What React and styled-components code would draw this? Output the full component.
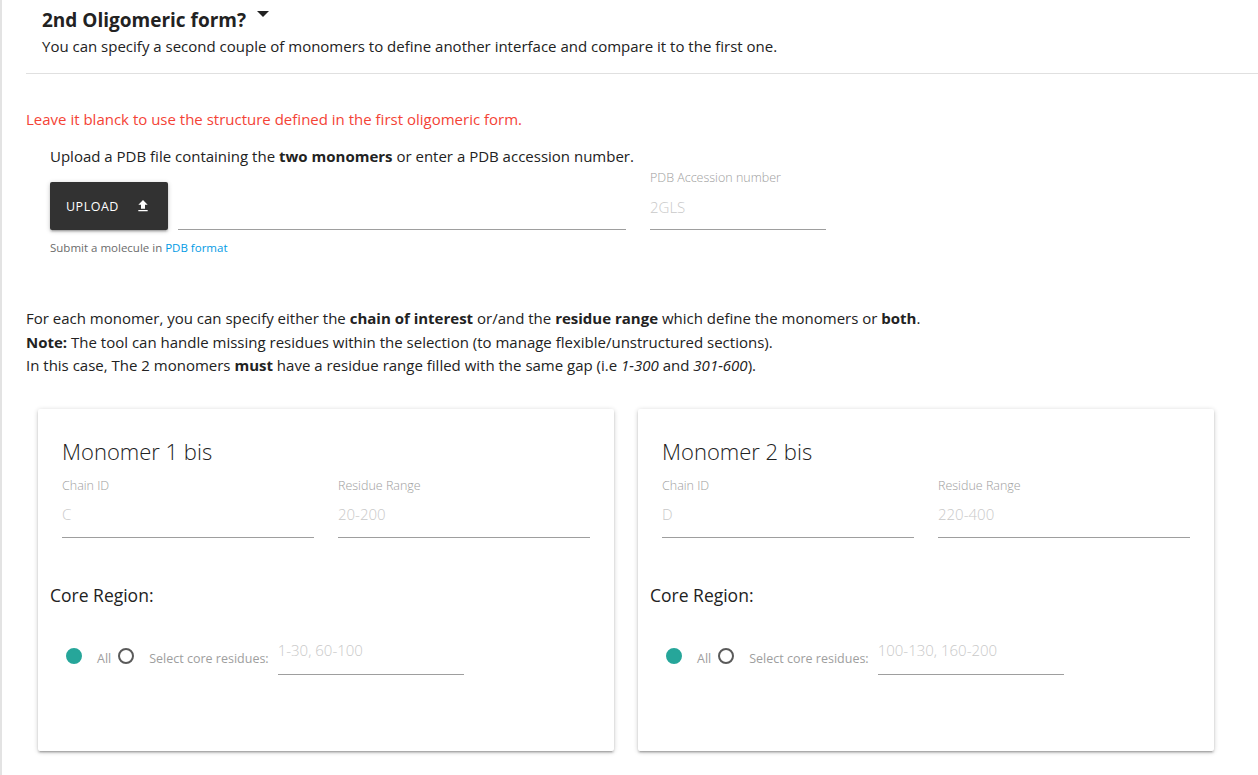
import React from 'react';
import styled, { createGlobalStyle } from 'styled-components';

const GlobalStyle = createGlobalStyle`
    body {
        margin: 0;
        background: #fff;
        font-family: "Open Sans", Lato, sans-serif;
        color: #222;
    }
    * {
        box-sizing: border-box;
    }
`;

const Page = styled.div`
    border-left: 2px solid #e3e3e3;
    padding-left: 24px;
    min-height: 775px;
`;

const Header = styled.div`
    padding: 8px 16px 16px;
    border-bottom: 1px solid #e0e0e0;
`;

const Title = styled.h2`
    display: flex;
    align-items: center;
    margin: 0;
    font-size: 19px;
    font-weight: 700;
    line-height: 24px;
`;

const Caret = styled.span`
    margin-left: 11px;
    margin-top: -12px;
    width: 0;
    height: 0;
    border-left: 6px solid transparent;
    border-right: 6px solid transparent;
    border-top: 6px solid #222;
`;

const Subtitle = styled.p`
    margin: 3px 0 0;
    font-size: 15px;
    line-height: 22px;
`;

const Warning = styled.p`
    margin: 34px 0 0;
    color: #f44336;
    font-size: 15px;
    line-height: 22px;
`;

const Intro = styled.p`
    margin: 15px 0 0 24px;
    font-size: 15px;
    line-height: 22px;
`;

const UploadRow = styled.div`
    display: flex;
    align-items: flex-end;
    margin: 4px 0 0 24px;
`;

const UploadButton = styled.button`
    display: flex;
    align-items: center;
    justify-content: space-between;
    width: 118px;
    height: 48px;
    padding: 0 17px 0 16px;
    border: none;
    border-radius: 2px;
    background: #323232;
    color: #fff;
    font-family: inherit;
    font-size: 12.5px;
    letter-spacing: 0.5px;
    text-transform: uppercase;
    box-shadow: 0 2px 2px 0 rgba(0, 0, 0, 0.14), 0 3px 1px -2px rgba(0, 0, 0, 0.12), 0 1px 5px 0 rgba(0, 0, 0, 0.2);
`;

const LineInput = styled.input`
    display: block;
    width: ${props => props.width || '100%'};
    height: ${props => props.height || 46}px;
    margin: 0;
    padding: 0 0 ${props => props.lift || 0}px;
    border: none;
    border-bottom: 1px solid #9e9e9e;
    outline: none;
    background: transparent;
    font-family: inherit;
    font-size: ${props => props.size || 15}px;
    color: #222;

    &::placeholder {
        color: #c9c9c9;
        font-weight: 300;
    }
`;

const FilePath = styled.div`
    width: 448px;
    margin-left: 10px;
`;

const Field = styled.div`
    display: flex;
    flex-direction: column;
    width: ${props => props.width || 'auto'};
    margin-left: ${props => props.offset || 0}px;
`;

const FieldLabel = styled.label`
    font-size: 12.5px;
    line-height: ${props => props.lh || 12}px;
    color: #9e9e9e;
    font-weight: 300;
`;

const Helper = styled.p`
    margin: 11px 0 0 24px;
    font-size: 11.5px;
    line-height: 14px;
    color: #6b6b6b;

    a {
        color: #039be5;
        text-decoration: none;
    }
`;

const Explain = styled.p`
    margin: 52px 0 0;
    font-size: 15px;
    line-height: 23.5px;
`;

const Cards = styled.div`
    display: grid;
    grid-template-columns: 576px 576px;
    gap: 24px;
    margin: 31px 0 0 12px;
`;

const Card = styled.div`
    padding: 26px 12px 76px;
    background: #fff;
    border-radius: 2px;
    box-shadow: 0 2px 2px 0 rgba(0, 0, 0, 0.14), 0 3px 1px -2px rgba(0, 0, 0, 0.12), 0 1px 5px 0 rgba(0, 0, 0, 0.2);
`;

const CardBody = styled.div`
    padding: 0 12px;
`;

const CardTitle = styled.h3`
    margin: 0;
    font-size: 22px;
    font-weight: 300;
    line-height: 32px;
`;

const FieldGrid = styled.div`
    display: grid;
    grid-template-columns: 1fr 1fr;
    gap: 24px;
    margin-top: 13px;
`;

const CoreTitle = styled.h4`
    margin: 45px 0 0;
    font-size: 17.5px;
    font-weight: 400;
    line-height: 24px;
`;

const RadioRow = styled.div`
    display: flex;
    align-items: center;
    height: 48px;
    margin-top: 20px;
    padding-left: 12px;
`;

const Radio = styled.label`
    position: relative;
    display: flex;
    align-items: center;
    height: 22px;
    margin-top: 15px;
    margin-right: ${props => props.gap || 0}px;
    padding-left: 35px;
    font-size: 12.5px;
    color: #9e9e9e;

    &::before {
        content: '';
        position: absolute;
        left: 4px;
        top: 1px;
        width: 16px;
        height: 16px;
        border-radius: 50%;
        box-sizing: border-box;
        border: 2px solid ${props => (props.checked ? '#26a69a' : '#5a5a5a')};
        background: ${props => (props.checked ? '#26a69a' : 'transparent')};
    }
`;

const UploadIcon = () => (
    <svg width="16" height="16" viewBox="0 0 24 24" fill="#fff">
        <path d="M9 16h6v-6h4l-7-7-7 7h4zm-4 2h14v2H5z" />
    </svg>
);

const Monomer = ({ name, chain, range, core }) => (
    <Card>
        <CardBody>
            <CardTitle>{name}</CardTitle>
            <FieldGrid>
                <Field>
                    <FieldLabel>Chain ID</FieldLabel>
                    <LineInput placeholder={chain} />
                </Field>
                <Field>
                    <FieldLabel>Residue Range</FieldLabel>
                    <LineInput placeholder={range} />
                </Field>
            </FieldGrid>
        </CardBody>
        <CoreTitle>Core Region:</CoreTitle>
        <RadioRow>
            <Radio checked gap={3}>All</Radio>
            <Radio gap={9}>Select core residues:</Radio>
            <Field width="186px">
                <LineInput placeholder={core} height={48} lift={1} />
            </Field>
        </RadioRow>
    </Card>
);

class App extends React.Component {
    render() {
        return (
            <Page>
                <GlobalStyle />
                <Header>
                    <Title>
                        2nd Oligomeric form?
                        <Caret />
                    </Title>
                    <Subtitle>
                        You can specify a second couple of monomers to define another interface and compare it to the first one.
                    </Subtitle>
                </Header>

                <Warning>Leave it blanck to use the structure defined in the first oligomeric form.</Warning>
                <Intro>
                    Upload a PDB file containing the <b>two monomers</b> or enter a PDB accession number.
                </Intro>
                <UploadRow>
                    <UploadButton>
                        Upload
                        <UploadIcon />
                    </UploadButton>
                    <FilePath>
                        <LineInput height={48} />
                    </FilePath>
                    <Field width="176px" offset={24}>
                        <FieldLabel lh={14}>PDB Accession number</FieldLabel>
                        <LineInput placeholder="2GLS" height={45} />
                    </Field>
                </UploadRow>
                <Helper>
                    Submit a molecule in <a href="#pdb">PDB format</a>
                </Helper>

                <Explain>
                    For each monomer, you can specify either the <b>chain of interest</b> or/and the <b>residue range</b> which define the monomers or <b>both</b>.
                    <br />
                    <b>Note:</b> The tool can handle missing residues within the selection (to manage flexible/unstructured sections).
                    <br />
                    In this case, The 2 monomers <b>must</b> have a residue range filled with the same gap (i.e <i>1-300</i> and <i>301-600</i>).
                </Explain>

                <Cards>
                    <Monomer name="Monomer 1 bis" chain="C" range="20-200" core="1-30, 60-100" />
                    <Monomer name="Monomer 2 bis" chain="D" range="220-400" core="100-130, 160-200" />
                </Cards>
            </Page>
        );
    }
}

export default App;
